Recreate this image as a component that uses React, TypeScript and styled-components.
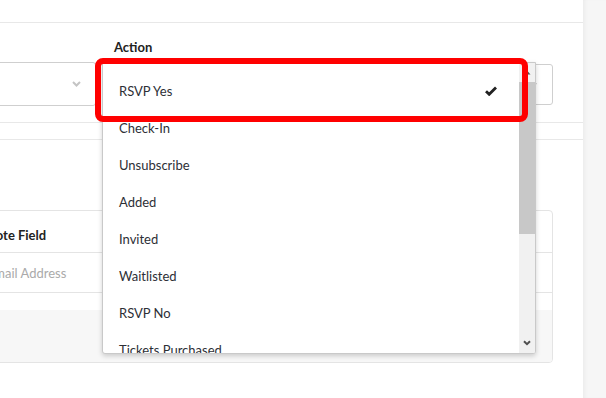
import React from "react";
import styled, { createGlobalStyle } from "styled-components";

const Global = createGlobalStyle`
  html, body { margin: 0; padding: 0; background: #fff; }
  body { font-family: Lato, "Open Sans", Arial, sans-serif; color: #333; overflow: hidden; }
  * { box-sizing: border-box; }
`;

const Page = styled.div`
  display: flex;
  width: 606px;
  height: 398px;
`;

const Main = styled.div`
  position: relative;
  width: 583px;
  height: 398px;
  overflow: hidden;
  background: #fff;
`;

const Sidebar = styled.div`
  flex: 1;
  background: #f6f6f6;
  box-shadow: inset 4px 0 5px -3px rgba(0, 0, 0, 0.06);
`;

const TopBar = styled.div`
  height: 23px;
  border-bottom: 1px solid #e8e8e8;
`;

const FormSection = styled.div`
  display: grid;
  grid-template-columns: 196px 451px;
  column-gap: 6px;
  row-gap: 7px;
  margin-left: -100px;
  padding: 16px 0 16px;
  border-bottom: 1px solid #e8e8e8;
  align-items: start;
`;

const Label = styled.div`
  font-size: 13px;
  font-weight: 700;
  line-height: 16px;
  color: #222;
  padding-left: 12px;
  height: 16px;
`;

const Select = styled.div<{ $h: number; $offset?: number }>`
  display: flex;
  align-items: center;
  justify-content: flex-end;
  height: ${(p) => p.$h}px;
  margin-top: ${(p) => p.$offset ?? 0}px;
  border: 1px solid #cfcfcf;
  border-radius: 3px;
  background: #fff;
  padding-right: ${(p) => (p.$offset ? 15 : 14)}px;
`;

const SecondDivider = styled.div`
  margin-top: 16px;
  border-top: 1px solid #e8e8e8;
  padding-top: 70px;
`;

const Card = styled.div`
  margin-left: -60px;
  width: 613px;
  border: 1px solid #e4e4e4;
  border-radius: 4px;
  overflow: hidden;
`;

const HeadRow = styled.div`
  height: 42px;
  display: flex;
  align-items: flex-end;
  padding: 0 0 9px 29px;
  border-bottom: 1px solid #e4e4e4;
  font-size: 13px;
  font-weight: 700;
  line-height: 16px;
  color: #222;
  white-space: nowrap;
`;

const BodyRow = styled.div`
  height: 40px;
  display: flex;
  align-items: center;
  padding-left: 46px;
  border-bottom: 1px solid #e4e4e4;
  font-size: 13px;
  color: #aaa;
  white-space: nowrap;
`;

const Spacer = styled.div`
  height: 17px;
`;

const Footer = styled.div`
  height: 52px;
  background: #f7f7f7;
`;

const Dropdown = styled.div`
  position: absolute;
  left: 102px;
  top: 62px;
  width: 434px;
  height: 292px;
  display: flex;
  background: #fff;
  border: 1px solid #c9c9c9;
  border-radius: 0 0 3px 3px;
  box-shadow: 0 2px 5px rgba(0, 0, 0, 0.18);
  overflow: hidden;
`;

const List = styled.div`
  flex: 1;
  padding-top: 9px;
  overflow: hidden;
`;

const Item = styled.div`
  height: 37px;
  display: flex;
  align-items: center;
  justify-content: space-between;
  padding: 0 22px 0 16px;
  font-size: 13px;
  color: #2d2f36;
  white-space: nowrap;
`;

const ScrollBar = styled.div`
  width: 16px;
  display: flex;
  flex-direction: column;
  background: #f1f1f1;
`;

const ScrollButton = styled.div<{ $h: number }>`
  height: ${(p) => p.$h}px;
  display: flex;
  align-items: center;
  justify-content: center;
  background: #f1f1f1;
`;

const Thumb = styled.div`
  height: 152px;
  margin-top: 1px;
  background: #c8c8c8;
`;

const Track = styled.div`
  flex: 1;
`;

const Highlight = styled.div`
  position: absolute;
  left: 95px;
  top: 58px;
  width: 433px;
  height: 64px;
  border: 6px solid #ff0000;
  border-radius: 8px;
`;

const Chevron = ({ color }: { color: string }) => (
  <svg width="9" height="6" viewBox="0 0 9 6">
    <path d="M1 1 L4.5 4.5 L8 1" fill="none" stroke={color} strokeWidth="2" />
  </svg>
);

const Check = () => (
  <svg width="12" height="10" viewBox="0 0 12 10">
    <path d="M1 5.2 L4.2 8.3 L11 1.5" fill="none" stroke="#222" strokeWidth="2.8" />
  </svg>
);

const items = [
  "RSVP Yes",
  "Check-In",
  "Unsubscribe",
  "Added",
  "Invited",
  "Waitlisted",
  "RSVP No",
  "Tickets Purchased",
  "Tickets Refunded",
];

export default function App() {
  return (
    <>
      <Global />
      <Page>
        <Main>
          <TopBar />
          <FormSection>
            <Label />
            <Label>Action</Label>
            <Select $h={44}>
              <Chevron color="#c4c4c4" />
            </Select>
            <Select $h={41} $offset={2}>
              <Chevron color="#999" />
            </Select>
          </FormSection>
          <SecondDivider>
            <Card>
              <HeadRow>Remote Field</HeadRow>
              <BodyRow>Email Address</BodyRow>
              <Spacer />
              <Footer />
            </Card>
          </SecondDivider>
          <Dropdown>
            <List>
              {items.map((it, i) => (
                <Item key={it}>
                  <span>{it}</span>
                  {i === 0 && <Check />}
                </Item>
              ))}
            </List>
            <ScrollBar>
              <ScrollButton $h={18}>
                <svg width="7" height="5" viewBox="0 0 7 5">
                  <path d="M0.5 4.5 L3.5 1 L6.5 4.5 Z" fill="#505050" />
                </svg>
              </ScrollButton>
              <Thumb />
              <Track />
              <ScrollButton $h={20}>
                <svg width="8" height="6" viewBox="0 0 8 6">
                  <path d="M1 1.2 L4 4.2 L7 1.2" fill="none" stroke="#505050" strokeWidth="2" />
                </svg>
              </ScrollButton>
            </ScrollBar>
          </Dropdown>
          <Highlight />
        </Main>
        <Sidebar />
      </Page>
    </>
  );
}
